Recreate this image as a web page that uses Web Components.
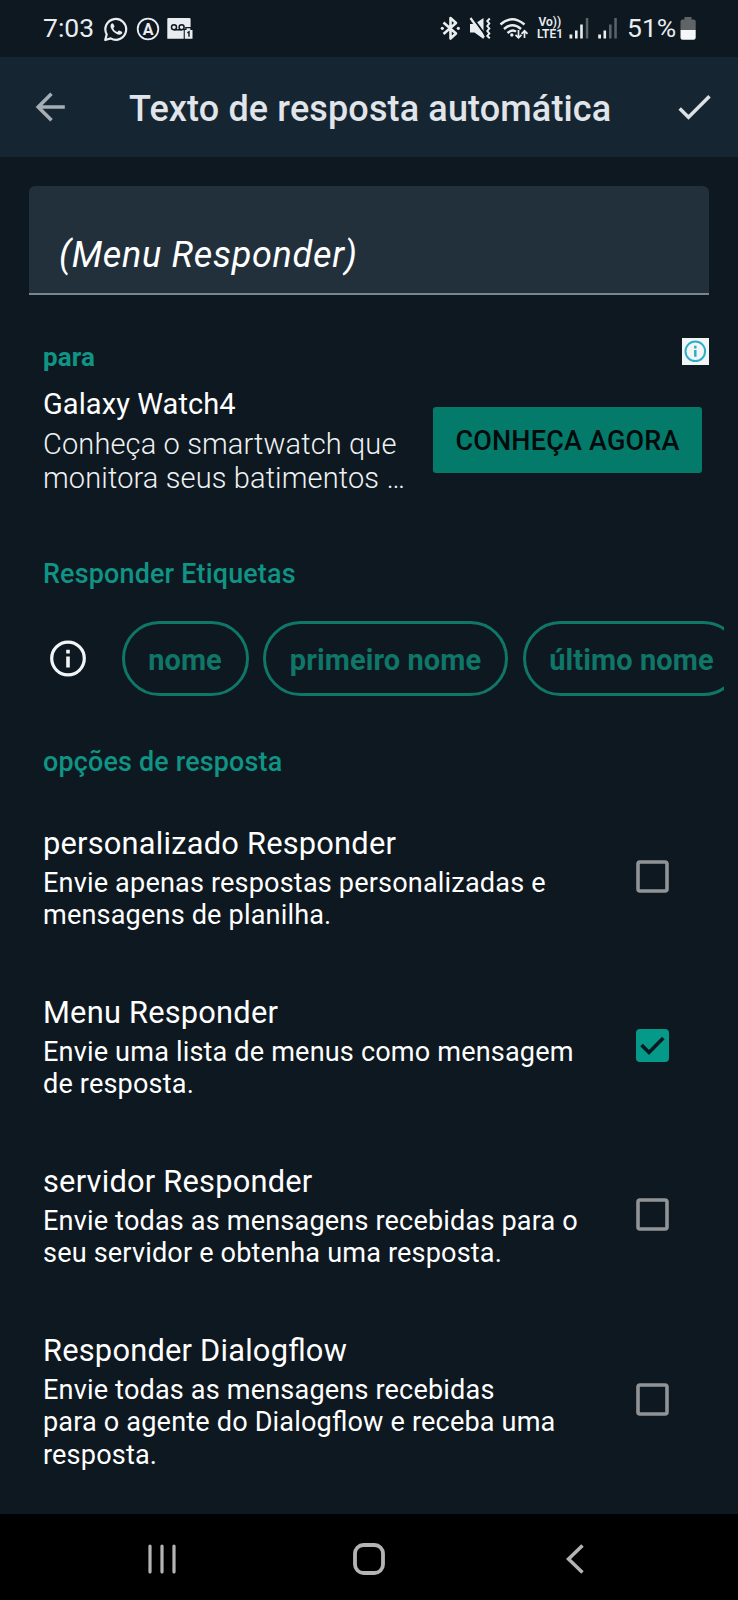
<!DOCTYPE html>
<html lang="pt-BR">
<head>
<meta charset="utf-8">
<title>Texto de resposta automática</title>
<style>
html,body{margin:0;background:#0e1820}
body{font-family:Roboto,"Noto Sans",sans-serif;color:#fff;width:738px;height:1600px;overflow:hidden}
</style>
</head>
<body>
<app-screen>
  <status-bar slot="top"></status-bar>
  <app-header slot="top">Texto de resposta automática</app-header>
  <text-field>(Menu Responder)</text-field>
  <ad-banner>
    <span slot="label">para</span>
    <span slot="title">Galaxy Watch4</span>
    <span slot="line1">Conheça o smartwatch que</span>
    <span slot="line2">monitora seus batimentos …</span>
    <span slot="action">CONHEÇA AGORA</span>
  </ad-banner>
  <section-title style="margin-top:63.5px">Responder Etiquetas</section-title>
  <chip-row>
    <tag-chip style="width:127px">nome</tag-chip>
    <tag-chip style="width:245px">primeiro nome</tag-chip>
    <tag-chip style="width:218px">último nome</tag-chip>
  </chip-row>
  <section-title style="margin-top:50px">opções de resposta</section-title>
  <option-list>
    <option-row heading="personalizado Responder">Envie apenas respostas personalizadas e<br>mensagens de planilha.</option-row>
    <option-row heading="Menu Responder" checked>Envie uma lista de menus como mensagem<br>de resposta.</option-row>
    <option-row heading="servidor Responder">Envie todas as mensagens recebidas para o<br>seu servidor e obtenha uma resposta.</option-row>
    <option-row heading="Responder Dialogflow">Envie todas as mensagens recebidas<br>para o agente do Dialogflow e receba uma<br>resposta.</option-row>
  </option-list>
  <nav-bar slot="bottom"></nav-bar>
</app-screen>
<script>
const define = (name, html, setup) => customElements.define(name, class extends HTMLElement {
  constructor() {
    super();
    this.attachShadow({ mode: 'open' }).innerHTML = html;
  }
  connectedCallback() { if (setup) setup(this, this.shadowRoot); }
});

define('app-screen', `
<style>
:host{display:flex;flex-direction:column;width:738px;height:1600px;background:#0e1820}
main{flex:1;min-height:0;overflow:hidden;display:flex;flex-direction:column}
</style>
<slot name="top"></slot><main><slot></slot></main><slot name="bottom"></slot>`);

define('status-bar', `
<style>
:host{display:flex;align-items:center;height:57px;box-sizing:border-box;padding:0 42px 0 43px;color:#e9edf0;font-size:26.5px;line-height:53px;white-space:nowrap}
svg{display:block;flex:none}
span{padding-bottom:2px}
.time{width:60px}
.pct{width:53px;margin-left:9px}
.volte{display:flex;flex-direction:column;width:28px;margin-left:9px;font-weight:600;padding-top:1px}
.volte span{display:block;line-height:11px;font-size:12px;padding-bottom:0}
</style>
<span class="time">7:03</span>
<svg width="26" height="26" viewBox="103 15 26 26" fill="none" stroke="#e9edf0" stroke-width="2.2"><path d="M105.2 39l1.5-5.6a10.4 10.4 0 1 1 4 4z" stroke-linejoin="round"/><path d="M112.4 22.2c-.8 0-1.9 1.1-1.9 2.9 0 3.6 5 8.6 8.900 8.600 1.700 0 2.900-1.200 2.900-2.300 0-.5-3-2-3.500-1.800-.6.3-1 1.500-1.500 1.400-1.500-.5-3.300-2.100-3.900-3.600-.2-.5 1-1.200 1.100-1.800.1-.5-1.200-3.400-2.100-3.400z" fill="#e9edf0" stroke="none"/></svg>
<svg width="26" height="26" viewBox="0 0 26 26" style="margin-left:6px"><circle cx="13" cy="13" r="10.300" fill="none" stroke="#e9edf0" stroke-width="1.800"/><text x="13" y="18.600" text-anchor="middle" font-size="16" font-weight="700" fill="#e9edf0">A</text></svg>
<svg width="27" height="24" viewBox="167 17 27 24" style="margin-left:6px"><path d="M168.300 18h21a1.300 1.300 0 0 1 1.300 1.300v19.500h-23.300v-19.800a1 1 0 0 1 1-1z" fill="#e9edf0"/><g fill="none" stroke="#0e1820" stroke-width="1.500"><circle cx="174" cy="27.300" r="2.500"/><circle cx="181.600" cy="27.300" r="2.500"/><path d="M174 29.800h7.600"/></g><path d="M183.700 39.500v-10.500h1.500v-2h6v12.500z" fill="#0e1820"/><path d="M184.800 30h1.700v-1.800h3.800v1.800h2.200v8.800h-7.700z" fill="#e9edf0"/><path d="M187.400 32.800l1.600-1v5" stroke="#0e1820" stroke-width="1.400" fill="none"/></svg>
<svg width="21" height="26" viewBox="440 16 21 26" style="margin-left:auto" fill="none" stroke="#e9edf0" stroke-width="2.600"><path d="M443.500 22.500l12.500 11-5.500 5v-20.500l5.500 5-12.500 11" stroke-linejoin="round"/><circle cx="442.300" cy="28.300" r="1.600" fill="#e9edf0" stroke="none"/><circle cx="458.300" cy="28.300" r="1.600" fill="#e9edf0" stroke="none"/></svg>
<svg width="23" height="26" viewBox="469 16 23 26" style="margin-left:8px"><path d="M470 24h4.500l9-6v21l-9-6.500h-4.500z" fill="#e9edf0"/><path d="M472.500 17.500l12.500 17" stroke="#0e1820" stroke-width="2"/><path d="M470.500 18l13.500 19.500" stroke="#e9edf0" stroke-width="2.200"/><path d="M489.800 18.500l-2.500 2.500 2 2.500-2 2.500 2 2.500-2 2.500 2 2.500-2 2.500 2.500 2.200" stroke="#e9edf0" stroke-width="2" fill="none"/></svg>
<svg width="29" height="26" viewBox="499 16 29 26" style="margin-left:7px" fill="none" stroke="#e9edf0" stroke-width="2.400"><path d="M500.500 24.500q11.500-10.500 24 0M504 29q8.500-7.500 17 0M507.500 33q5-4.300 8.500-1.300"/><circle cx="511.800" cy="35" r="1.700" fill="#e9edf0" stroke="none"/><path d="M518.500 30v7.500m-3-2.700l3 3 3-3M524.500 38v-7m-3 2.800l3-3 3 3" stroke-width="1.700"/></svg>
<div class="volte"><span style="padding-left:1.500px">Vo))</span><span style="font-size:12px;line-height:13px">LTE1</span></div>
<svg width="20" height="26" viewBox="569 16 20 26" style="margin-left:4px" fill="#e9edf0"><path d="M569.500 34.500h2.800v4h-2.800zM575 30.500h2.600v8h-2.600zM580.200 24.500h2.600v14h-2.600z"/><path d="M585.800 18h2.500v20.500h-2.500z" fill="#59636b"/></svg>
<svg width="20" height="26" viewBox="598 16 20 26" style="margin-left:9px" fill="#e9edf0"><path d="M598.200 34.500h2.800v4h-2.800zM603.500 30.500h2.600v8h-2.600z"/><path d="M609 24.500h2.600v14h-2.600zM614.300 18h2.500v20.500h-2.500z" fill="#59636b"/></svg>
<span class="pct">51%</span>
<svg width="16" height="26" viewBox="680 16 16 26"><path d="M684.500 17h7v2.500h2.200a2 2 0 0 1 2 2v8.800h-15.200v-8.800a2 2 0 0 1 2-2h2z" fill="#606467"/><path d="M680.500 30h15.200v7.500a2.200 2.200 0 0 1-2.200 2.200h-10.800a2.200 2.200 0 0 1-2.200-2.200z" fill="#f4f6f7"/></svg>`);

define('app-header', `
<style>
:host{display:flex;align-items:center;height:100px;box-sizing:border-box;padding:0 27px 0 35px;background:#152632;font-size:36px;letter-spacing:.14px;font-weight:500;color:#e1e5ea}
.t{flex:1;padding-left:63px;white-space:nowrap;line-height:42px;padding-top:4px}
svg{flex:none}
</style>
<svg width="31" height="30" viewBox="0 0 31 30" fill="none" stroke="#a5adb5" stroke-width="3.600"><path d="M29.800 15H3.500M16.500 1.700L3.200 15l13.300 13.300"/></svg>
<div class="t"><slot></slot></div>
<svg width="33" height="28" viewBox="679 93 33 28" fill="none" stroke="#dce1e5" stroke-width="3.500"><path d="M680.700 108.500l8.800 8.700 21-21"/></svg>`);

define('text-field', `
<style>
:host{display:block;flex:none;box-sizing:border-box;height:109px;margin:29px 29px 0;padding:48px 30px 0;background:#22303c;border-bottom:2.5px solid #7c858c;border-radius:6px 6px 0 0;font-size:36px;letter-spacing:.7px;line-height:42px;font-style:italic;white-space:nowrap}
</style><slot></slot>`);

define('ad-banner', `
<style>
:host{display:grid;flex:none;grid-template-columns:1fr 269px;margin:42.500px 36px 0 43px;white-space:nowrap}
.label{font-size:26px;letter-spacing:.1px;font-weight:700;line-height:32px;color:#0f9485;margin-top:3px}
.title{font-size:29px;letter-spacing:.08px;line-height:40px;margin-top:11px}
.desc{font-size:29px;letter-spacing:.13px;font-weight:300;line-height:34px;margin-top:3px;color:#eef1f3}
.desc slot{display:block}
.side{display:flex;flex-direction:column;align-items:flex-end}
.info{display:block;margin-right:-7px}
button{all:unset;display:block;box-sizing:border-box;width:269px;height:66px;margin-top:42.500px;border-radius:3px;background:#047a6b;color:#020a0c;text-align:center;font-size:27px;letter-spacing:.2px;font-weight:500;line-height:69px}
</style>
<div><div class="label"><slot name="label"></slot></div><div class="title"><slot name="title"></slot></div><div class="desc"><slot name="line1"></slot><slot name="line2"></slot></div></div>
<div class="side"><svg class="info" width="27" height="27" viewBox="0 0 27 27"><path d="M0 0h27v27H0z" fill="#f1f5f6"/><circle cx="13.300" cy="13.300" r="9.800" fill="none" stroke="#2eadc9" stroke-width="2"/><path d="M13.300 7.800v2.700M13.300 12v6.800" stroke="#2eadc9" stroke-width="2.500"/></svg>
<button><slot name="action"></slot></button></div>`);

define('section-title', `
<style>:host{display:block;flex:none;margin-left:43px;font-size:26.900px;letter-spacing:.19px;font-weight:500;line-height:32px;color:#0f9485;white-space:nowrap}</style><slot></slot>`);

define('chip-row', `
<style>
:host{display:flex;flex:none;align-items:center;margin:30.500px 14px 0 50px;height:75px;overflow:hidden}
svg{flex:none;margin-right:34.500px}
.chips{display:flex;gap:14.500px}
</style>
<svg width="37" height="37" viewBox="0 0 37 37"><circle cx="18" cy="18.500" r="16.300" fill="none" stroke="#f2f5f7" stroke-width="3.200"/><path d="M18 9.800v3.600M18 16.500v11" stroke="#f2f5f7" stroke-width="3.600"/></svg>
<div class="chips"><slot></slot></div>`);

define('tag-chip', `
<style>:host{display:block;flex:none;box-sizing:border-box;height:75px;border:3px solid #0f7668;border-radius:38px;color:#0f7668;font-weight:700;font-size:29px;letter-spacing:.08px;line-height:73px;text-align:center;white-space:nowrap}</style><slot></slot>`);

define('option-list', `<style>:host{display:block;flex:none;margin-top:14.200px}</style><slot></slot>`);

define('option-row', `
<style>
:host{display:flex;align-items:center;padding-left:43px;padding-right:69.500px;white-space:nowrap}
.text{flex:1;padding:34.500px 0 28.900px;font-feature-settings:"liga" 1}
.h{font-size:30.800px;letter-spacing:.22px;line-height:36px;margin-bottom:5px}
.d{font-size:27.100px;letter-spacing:.16px;line-height:32.300px}
svg{flex:none}
.on{display:none}
:host([checked]) .on{display:block}
:host([checked]) .off{display:none}
</style>
<div class="text"><div class="h"></div><div class="d"><slot></slot></div></div>
<svg class="off" width="33" height="33" viewBox="0 0 33 33"><rect x="2" y="2" width="29" height="29" rx="2" fill="none" stroke="#919496" stroke-width="3.600"/></svg>
<svg class="on" width="33" height="33" viewBox="0 0 33 33"><rect width="33" height="33" rx="4" fill="#05998a"/><path d="M5.500 16l7.500 7.500L27.300 9" fill="none" stroke="#0e1820" stroke-width="3.600"/></svg>`,
(el, root) => { root.querySelector('.h').textContent = el.getAttribute('heading'); });

define('nav-bar', `
<style>
:host{display:grid;grid-template-columns:repeat(3,206.500px);justify-content:center;justify-items:center;align-items:center;height:86px;padding:3px 1px 0 0;box-sizing:border-box;background:#000}
svg{display:block}
</style>
<svg width="28" height="30" viewBox="0 0 28 30" stroke="#b4b4b4" stroke-width="3.200" stroke-linecap="round"><path d="M2 2v26M14 2v26M26 2v26"/></svg>
<svg width="32" height="32" viewBox="0 0 32 32"><rect x="2" y="2" width="28" height="28" rx="8.500" fill="none" stroke="#b4b4b4" stroke-width="3.800"/></svg>
<svg width="18" height="30" viewBox="0 0 18 30"><path d="M16.500 1.500L2.500 15l14 13.500" fill="none" stroke="#b4b4b4" stroke-width="3.500"/></svg>`);
</script>
</body>
</html>
